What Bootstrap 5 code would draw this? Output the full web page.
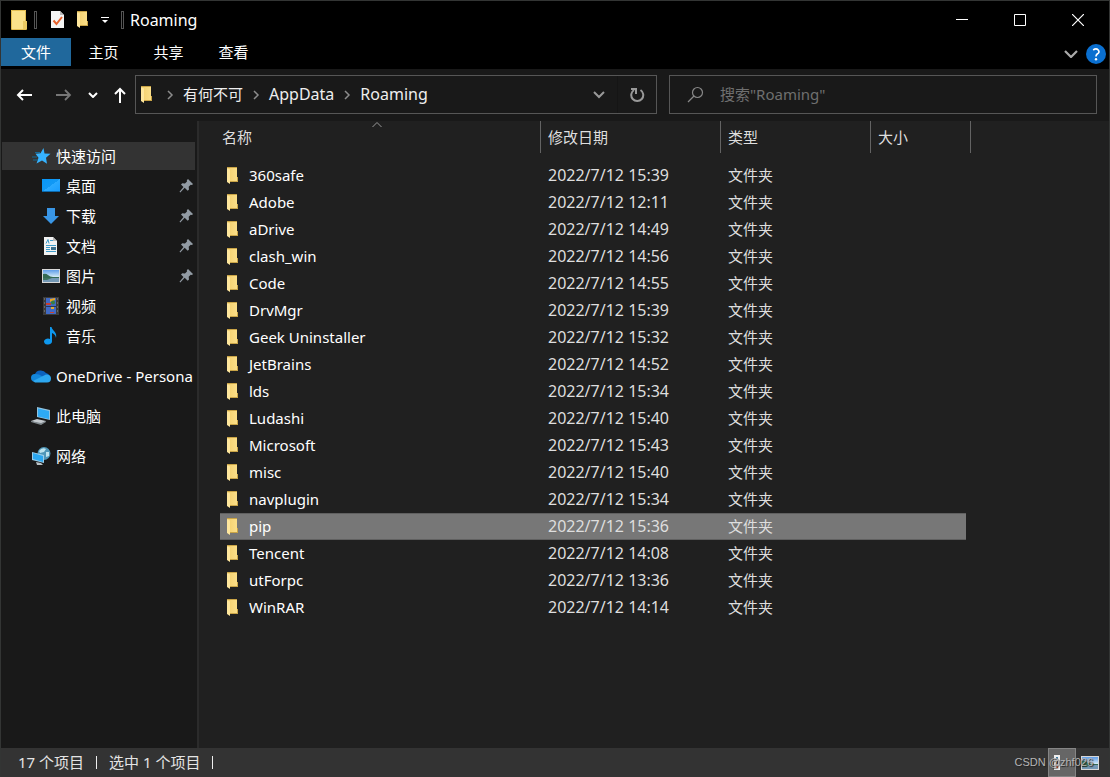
<!DOCTYPE html>
<html lang="zh-CN" data-bs-theme="dark">
<head>
<meta charset="utf-8">
<meta name="viewport" content="width=device-width, initial-scale=1">
<title>Roaming</title>
<link href="https://cdn.jsdelivr.net/npm/bootstrap@5.3.0/dist/css/bootstrap.min.css" rel="stylesheet">
<style>
  body { font-family: "Noto Sans", "Noto Sans CJK SC", sans-serif; font-size: 15px; line-height: 20px; color: #fff; background: #191919; }
  svg { display: block; flex: none; }
  button { background: none; border: 0; padding: 0; color: inherit; }
  .latin { font-size: 16px; }
  .explorer { border: 1px solid #333534; border-bottom: 0; }
  .titlebar { background: #000; height: 37px; padding: 0 2px 0 9px; gap: 6px; }
  .quick { gap: 12px; margin: 0 6px 0 8px; }
  .grip { width: 3px; height: 18px; border: 1px solid #555; }
  .win-btn { width: 58px; height: 37px; display: grid; place-items: center; }
  .ribbon { background: #000; height: 31px; padding-right: 3px; }
  .tab-btn { width: 65px; height: 29px; padding-bottom: 2px; }
  .tab-file { width: 70px; height: 28px; background: #20689c; }
  .toolrow { padding: 6px 12px 7px 15px; }
  .nav-arrows { width: 119px; }
  .fields { gap: 12px; min-width: 0; }
  .field { height: 39px; border: 1px solid #565656; flex-basis: 0; min-width: 0; }
  .address { flex-grow: 516; padding-left: 4px; }
  .finder { flex-grow: 409; padding-left: 17px; gap: 16px; }
  .finder input { background: none; border: 0; outline: 0; color: #fff; padding: 0 0 2px; min-width: 0; }
  .finder input::placeholder { color: #6f6f6f; opacity: 1; }
  .crumb { color: #eee; text-decoration: none; padding-bottom: 2px; }
  .sep { width: 26px; display: grid; place-items: center; }
  .refresh { width: 39px; height: 37px; border-left: 1px solid #151515; display: grid; place-items: center; }
  .sidebar { width: 198px; border-right: 2px solid #2b2b2b; padding: 21px 2px 0 1px; }
  .place { height: 30px; padding-left: 28px; gap: 4px; color: #fff; text-decoration: none; white-space: nowrap; overflow: hidden; }
  .place.picked { height: 28px; margin-bottom: 1px; background: #333; }
  .place.inner { padding: 0 2px 0 40px; gap: 5px; }
  .place.apart { margin-top: 10px; }
  .listing { background: #202020; padding-left: 21px; min-width: 0; }
  .files { width: 751px; table-layout: fixed; border-collapse: separate; border-spacing: 0; color: #dedede; }
  .files th { height: 32px; padding: 0 7px; font-weight: 400; border-right: 1px solid #636363; position: relative; }
  .files th:first-child { padding-left: 2px; }
  .files td { height: 27px; padding: 0 7px 2px; border: 1px solid transparent; border-width: 1px 0; white-space: nowrap; }
  .files td:first-child { padding: 0 6px; color: #fff; }
  .files .stamp { font-size: 16px; }
  .files tr.first-gap td { height: 9px; padding: 0; border: 0; }
  .files tr.picked td:not(:last-child) { background: #777; border-color: #606060; }
  .files td:last-child { padding: 0; }
  .entry { gap: 10px; }
  .entry span { padding-bottom: 2px; }
  .sort-mark { position: absolute; top: 1px; left: 50%; margin-left: -8px; }
  .status { background: #333; height: 29px; padding-left: 17px; gap: 12px; color: #e4e4e4; }
  .status > span { padding-bottom: 2px; }
  .rule { width: 1px; height: 13px; background: #eee; }
  .view-btn { width: 28px; height: 29px; display: grid; place-items: center; }
  .view-btn.on { background: #666; border: 1px solid #858585; }
  .views { padding-right: 5px; }
  .watermark { position: absolute; right: 16px; bottom: 6px; font: 11px/18px "Liberation Sans", sans-serif; color: #b5b5b5; text-shadow: 1px 1px 1px #222; }
</style>
</head>
<body>
<svg width="0" height="0" class="position-absolute" aria-hidden="true">
  <defs>
    <linearGradient id="gold"><stop offset="0" stop-color="#f3cf6c"/><stop offset="1" stop-color="#fce08b"/></linearGradient>
    <linearGradient id="screen" x2="1" y2="1"><stop offset="0" stop-color="#0796f7"/><stop offset=".5" stop-color="#1299f5"/><stop offset=".5" stop-color="#2baaff"/><stop offset="1" stop-color="#179cff"/></linearGradient>
    <linearGradient id="sky" x2="0" y2="1"><stop offset="0" stop-color="#5f9de8"/><stop offset=".6" stop-color="#d8edf6"/></linearGradient>
  </defs>
  <symbol id="folder" viewBox="0 0 13 17"><path d="M1 0h10v12h1v3H4z" fill="url(#gold)"/><path d="M1 0h10v1H1zM11 10h1v5H4v-1h7z" fill="#c9a447"/><path d="M1 1l3 1.500V17L1 15z" fill="#ffe79d"/></symbol>
  <symbol id="pin" viewBox="0 0 14 14"><path d="M9 0l5 5-1 1-1.300-.300-2 2 .300 2.800-1.300 1.300-3-3L1.300 13.500l-.800-.800L4.500 8 2 5.600l1.300-1.300L6 4.500l2-2-.200-1.300z" fill="#929ba4"/></symbol>
  <symbol id="chev" viewBox="0 0 8 10"><path d="M2 1l4 4-4 4" fill="none" stroke="#8c8c8c" stroke-width="1.500"/></symbol>
  <symbol id="photo" viewBox="0 0 18 14"><path d="M0 0h18v14H0z" fill="#d8d8d8"/><path d="M1 1h16v12H1z" fill="url(#sky)"/><path d="M1 5q3-1 5 1t5 2h6v1H1z" fill="#356b54"/><path d="M1 9h16v4H1z" fill="#7398b5"/><path d="M1 9h9l-5 2H1z" fill="#3f7562"/></symbol>
</svg>

<div class="explorer d-flex flex-column min-vh-100">
  <header class="titlebar d-flex align-items-center">
    <svg width="18" height="20" viewBox="0 0 18 20"><path d="M1 0h15v11h1v8H1z" fill="#fbe18a"/><path d="M1.500 .500h14v11h1v8h-15z" fill="none" stroke="#e3bd51"/><path d="M13 19v-8h4v8z" fill="#ecca62"/></svg>
    <span class="grip"></span>
    <div class="quick d-flex align-items-center">
      <button aria-label="属性"><svg width="13" height="17" viewBox="0 0 13 17"><path d="M0 0h9l4 4v13H0z" fill="#f4f4f4"/><path d="M9 0v4h4z" fill="#b8b8b8"/><path d="M2.500 9.500l3 3.500 5.500-7" fill="none" stroke="#e8622c" stroke-width="2"/></svg></button>
      <button aria-label="新建文件夹"><svg width="13" height="17"><use href="#folder"/></svg></button>
      <button aria-label="自定义快速访问工具栏"><svg width="8" height="8" viewBox="0 0 8 8"><path d="M0 1.500h8" stroke="#fff"/><path d="M1 4h6L4 7z" fill="#fff"/></svg></button>
    </div>
    <span class="grip"></span>
    <span class="latin">Roaming</span>
    <div class="d-flex ms-auto">
      <button class="win-btn" aria-label="最小化"><svg width="12" height="12"><path d="M0 5.500h12" stroke="#fff"/></svg></button>
      <button class="win-btn" aria-label="最大化"><svg width="12" height="12"><path d="M.500.500h11v11H.500z" fill="none" stroke="#fff"/></svg></button>
      <button class="win-btn" aria-label="关闭"><svg width="12" height="12"><path d="M0 0l12 12M12 0L0 12" stroke="#fff" stroke-width="1.200"/></svg></button>
    </div>
  </header>

  <nav class="ribbon d-flex align-items-start">
    <button class="tab-file">文件</button>
    <button class="tab-btn">主页</button>
    <button class="tab-btn">共享</button>
    <button class="tab-btn">查看</button>
    <div class="d-flex align-items-center align-self-center ms-auto">
      <button class="me-2" aria-label="展开功能区"><svg width="14" height="8" viewBox="0 0 14 8"><path d="M1 1l6 6 6-6" fill="none" stroke="#aaa" stroke-width="2.200"/></svg></button>
      <button aria-label="帮助"><svg width="20" height="20" viewBox="0 0 20 20"><circle cx="10" cy="10" r="10" fill="#0a6fd0"/><path d="M7.200 6q3-2.200 5 0t-1 4q-1.200 1-1.200 2.500" fill="none" stroke="#fff" stroke-width="1.700"/><circle cx="10" cy="15.200" r="1.200" fill="#fff"/></svg></button>
    </div>
  </nav>

  <div class="toolrow d-flex">
    <div class="nav-arrows d-flex align-items-center flex-shrink-0">
      <button aria-label="后退"><svg width="16" height="12" viewBox="0 0 16 12"><path d="M16 6H2M7 1L2 6l5 5" fill="none" stroke="#fff" stroke-width="2"/></svg></button>
      <button class="ms-4" aria-label="前进"><svg width="16" height="12" viewBox="0 0 16 12"><path d="M0 6h14M9 1l5 5-5 5" fill="none" stroke="#777" stroke-width="1.800"/></svg></button>
      <button class="ms-3" aria-label="最近的位置"><svg width="10" height="6" viewBox="0 0 10 6"><path d="M1 1l4 4 4-4" fill="none" stroke="#fff" stroke-width="2"/></svg></button>
      <button class="ms-3" aria-label="上移"><svg width="12" height="16" viewBox="0 0 12 16"><path d="M6 16V2M1 7l5-5 5 5" fill="none" stroke="#fff" stroke-width="2"/></svg></button>
    </div>
    <div class="fields d-flex flex-grow-1">
      <div class="field address d-flex align-items-center">
        <svg class="me-1" width="13" height="17"><use href="#folder"/></svg>
        <span class="sep"><svg width="8" height="10"><use href="#chev"/></svg></span>
        <a class="crumb" href="#">有何不可</a>
        <span class="sep"><svg width="8" height="10"><use href="#chev"/></svg></span>
        <a class="crumb latin" href="#">AppData</a>
        <span class="sep"><svg width="8" height="10"><use href="#chev"/></svg></span>
        <a class="crumb latin" href="#">Roaming</a>
        <button class="ms-auto me-2 pe-1" aria-label="以前的位置"><svg width="12" height="8" viewBox="0 0 12 8"><path d="M1 1l5 5 5-5" fill="none" stroke="#999" stroke-width="2"/></svg></button>
        <button class="refresh" aria-label="刷新"><svg width="15" height="16" viewBox="0 0 15 16"><path d="M10.500 3A6 6 0 1 1 4 3" fill="none" stroke="#999" stroke-width="2"/><path d="M1 2h5v5" fill="none" stroke="#999" stroke-width="2"/></svg></button>
      </div>
      <div class="field finder d-flex align-items-center">
        <svg width="17" height="17" viewBox="0 0 17 17"><circle cx="10.500" cy="6.500" r="5" fill="none" stroke="#888" stroke-width="1.200"/><path d="M7 10l-6 6" stroke="#888" stroke-width="1.200"/></svg>
        <input class="flex-grow-1" type="search" aria-label="搜索" placeholder="搜索&quot;Roaming&quot;">
      </div>
    </div>
  </div>

  <div class="d-flex flex-grow-1">
    <nav class="sidebar flex-shrink-0">
      <a href="#" class="place picked d-flex align-items-center"><svg width="22" height="18" viewBox="0 0 22 18"><path d="M13.500 1l1 5.500 6 .200-4.500 4 1 6-5-3.200-5.500 3 2-5.800-3-4 5-.500z" fill="#36b3ff"/><path d="M2 10h5M5 5.500h5M3 13h5" stroke="#176894"/></svg>快速访问</a>
      <a href="#" class="place inner d-flex align-items-center"><svg width="19" height="14" viewBox="0 0 19 14"><path d="M0 0h18v13H0z" fill="url(#screen)"/><path d="M0 12.500h18" stroke="#0c69ad"/></svg>桌面<svg class="ms-auto" width="14" height="14"><use href="#pin"/></svg></a>
      <a href="#" class="place inner d-flex align-items-center"><svg width="19" height="16" viewBox="0 0 19 16"><path d="M5 0h8v8h4l-8 8-8-8h4z" fill="#3996e6"/></svg>下载<svg class="ms-auto" width="14" height="14"><use href="#pin"/></svg></a>
      <a href="#" class="place inner d-flex align-items-center"><svg width="19" height="18" viewBox="0 0 19 18"><path d="M2 0h9l4 4v14H2z" fill="#f2f2f2"/><path d="M11 0v4h4z" fill="#b7b7b7"/><path d="M4 6.500l2-4 1 4M8 3.500h3M4 8.500h10M4 10.500h4M4 12.500h4M4 14.500h10" fill="none" stroke="#3d9ccb"/><path d="M9 10h5v3H9z" fill="#3b6f8c"/></svg>文档<svg class="ms-auto" width="14" height="14"><use href="#pin"/></svg></a>
      <a href="#" class="place inner d-flex align-items-center"><svg width="19" height="14" viewBox="0 0 19 14"><use href="#photo" width="18" height="14"/></svg>图片<svg class="ms-auto" width="14" height="14"><use href="#pin"/></svg></a>
      <a href="#" class="place inner d-flex align-items-center"><svg width="19" height="18" viewBox="0 0 19 18"><path d="M1 0h16v18H1z" fill="#3b3b3b"/><path d="M4 1h10v16H4z" fill="#416ac4"/><path d="M2.500 1v16M15.500 1v16" stroke="#666" stroke-dasharray="2 2"/><path d="M8 2l5-1v2l-5 2z" fill="#e9a528"/><path d="M4 6h5v2H4z" fill="#c83e31"/><circle cx="11" cy="5.500" r="2" fill="#378041"/><path d="M4 9.500h10" stroke="#26365c"/><path d="M9 10h3v2H9z" fill="#e4a930"/><path d="M8 15h4v1H8z" fill="#c84435"/></svg>视频</a>
      <a href="#" class="place inner d-flex align-items-center"><svg width="19" height="19" viewBox="0 0 19 19"><path d="M8 0h1.500c1 4 6 5 4.500 11-.500-3-2-4-4-5v8.500A4 3 0 1 1 8 12z" fill="#0e98ee"/></svg>音乐</a>
      <a href="#" class="place apart d-flex align-items-center"><svg width="22" height="14" viewBox="0 0 22 14"><path d="M5 5A6 5 0 0 1 16 4q4 1 4 5L3 10A4 4 0 0 1 5 5" fill="#0c62bd"/><path d="M1 9q0-4 4-4l4 .500 7 4L3 12.500Q1 12 1 9" fill="#1387dc"/><path d="M3 12l8-4 5-2.500q5 0 5 4t-4 4H5z" fill="#2da7ef"/></svg>OneDrive - Persona</a>
      <a href="#" class="place apart d-flex align-items-center"><svg width="22" height="18" viewBox="0 0 22 18"><path d="M7 0l13 3v10L7 10z" fill="#92c3df"/><path d="M8 1.500l11 2.500v8L8 9.500z" fill="#2daaf5"/><path d="M1 14l6-2 9 2-5 3z" fill="#c5cbd0"/><path d="M1 14v1l10 3 5-3v-1l-5 2z" fill="#80898e"/></svg>此电脑</a>
      <a href="#" class="place apart d-flex align-items-center"><svg width="22" height="18" viewBox="0 0 22 18"><circle cx="14" cy="6.500" r="6.500" fill="#4f96b7"/><path d="M9 4q3-4 7-2l-2 3-4 1zM16 5l3 0v4l-3 1z" fill="#bde3ed"/><path d="M2 5l12 3v8L2 13z" fill="#9acde8"/><path d="M3 6l10 3v6L3 12z" fill="#2ba7ef"/><path d="M6 15l5 1 2 2H7z" fill="#b9c1c5"/></svg>网络</a>
    </nav>

    <main class="listing flex-grow-1">
      <table class="files">
        <colgroup><col style="width:321px"><col style="width:180px"><col style="width:150px"><col style="width:95px"><col></colgroup>
        <thead>
          <tr><th><button>名称</button><svg class="sort-mark" width="10" height="6" viewBox="0 0 10 6"><path d="M.500 5L5 .500 9.500 5" fill="none" stroke="#999"/></svg></th><th><button>修改日期</button></th><th><button>类型</button></th><th colspan="2"><button>大小</button></th></tr>
        </thead>
        <tbody id="rows"><tr class="first-gap"><td colspan="5"></td></tr></tbody>
      </table>
    </main>
  </div>

  <footer class="status d-flex align-items-center position-relative">
    <span>17 个项目</span><i class="rule"></i><span>选中 1 个项目</span><i class="rule"></i>
    <div class="views d-flex ms-auto">
      <button class="view-btn on" aria-label="详细信息"><svg width="16" height="17" viewBox="0 0 16 17"><path d="M0 1h6v15H0z" fill="#eee"/><path d="M2 3h2v2H2z" fill="#397ba3"/><path d="M2 7h2v3H2z" fill="#333"/><path d="M2 12h2v2H2z" fill="#c53824"/></svg></button>
      <button class="view-btn" aria-label="大图标"><svg width="18" height="14"><use href="#photo"/></svg></button>
    </div>
    <div class="watermark">CSDN @zhf026</div>
  </footer>
</div>

<script src="https://cdn.jsdelivr.net/npm/bootstrap@5.3.0/dist/js/bootstrap.bundle.min.js"></script>
<script>
  const files = [
    ["360safe", "15:39"], ["Adobe", "12:11"], ["aDrive", "14:49"], ["clash_win", "14:56"],
    ["Code", "14:55"], ["DrvMgr", "15:39"], ["Geek Uninstaller", "15:32"], ["JetBrains", "14:52"],
    ["lds", "15:34"], ["Ludashi", "15:40"], ["Microsoft", "15:43"], ["misc", "15:40"],
    ["navplugin", "15:34"], ["pip", "15:36"], ["Tencent", "14:08"], ["utForpc", "13:36"], ["WinRAR", "14:14"]
  ];
  document.getElementById("rows").insertAdjacentHTML("beforeend", files.map(([name, time]) => `
    <tr class="${name === "pip" ? "picked" : ""}">
      <td><div class="entry d-flex align-items-center"><svg width="13" height="17"><use href="#folder"/></svg><span>${name}</span></div></td>
      <td class="stamp">2022/7/12 ${time}</td><td>文件夹</td><td></td><td></td>
    </tr>`).join(""));
</script>
</body>
</html>
